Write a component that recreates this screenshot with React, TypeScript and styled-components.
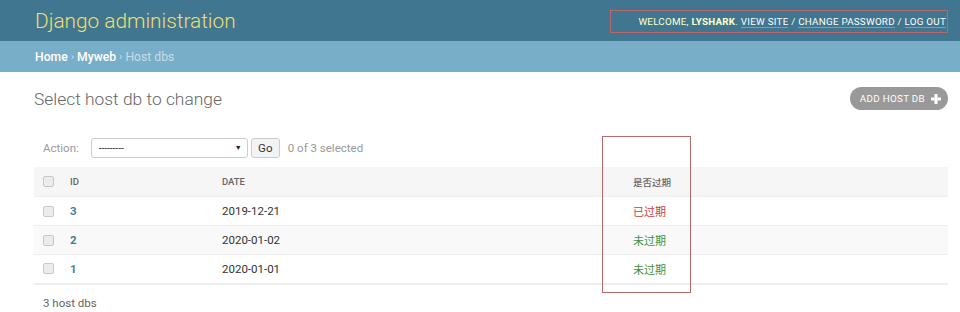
import styled, { createGlobalStyle } from 'styled-components';

const GlobalStyle = createGlobalStyle`
  html, body {
    margin: 0;
    padding: 0;
    background: #fff;
    font-family: Roboto, "Liberation Sans", "Noto Sans CJK SC", sans-serif;
    color: #333;
  }
`;

const Page = styled.div`
  width: 960px;
  height: 312px;
  position: relative;
  overflow: hidden;
`;

const Header = styled.div`
  height: 41px;
  background: #417690;
  display: flex;
  align-items: center;
  justify-content: space-between;
  padding: 0 14px 0 35px;
`;

const Branding = styled.div`
  font-size: 20.8px;
  font-weight: 300;
  color: #f0df6a;
`;

const UserTools = styled.div`
  font-size: 9.8px;
  letter-spacing: 0.25px;
  text-transform: uppercase;
  color: #ffc;
  margin-top: 2px;
`;

const UserName = styled.strong`
  font-weight: 700;
`;

const ToolLink = styled.span`
  color: #fff;
  border-bottom: 1px solid rgba(255, 255, 255, 0.3);
`;

const Breadcrumbs = styled.div`
  height: 31px;
  background: #79aec8;
  display: flex;
  align-items: center;
  padding-left: 35px;
  font-size: 12.2px;
  color: #c4dce8;
`;

const Crumb = styled.span`
  color: #fff;
  font-weight: 500;
`;

const Sep = styled.span`
  margin: 0 3px;
  font-size: 11px;
`;

const Content = styled.div`
  padding: 15px 12px 0 34px;
`;

const TitleRow = styled.div`
  display: flex;
  align-items: center;
  justify-content: space-between;
  height: 23px;
`;

const Title = styled.h1`
  margin: 0;
  font-size: 17.4px;
  font-weight: 300;
  color: #666;
`;

const AddButton = styled.div`
  height: 23px;
  padding: 0 7px 0 10px;
  border-radius: 12px;
  background: #999;
  color: #fff;
  font-size: 9.8px;
  letter-spacing: 0.3px;
  display: flex;
  align-items: center;
  gap: 6px;
`;

const Actions = styled.div`
  margin-top: 27px;
  height: 22px;
  display: flex;
  align-items: center;
  padding-left: 9px;
  font-size: 11.5px;
  color: #999;
`;

const Select = styled.div`
  margin-left: 12px;
  width: 157px;
  height: 20px;
  border: 1px solid #ccc;
  border-radius: 3px;
  display: flex;
  align-items: center;
  justify-content: space-between;
  padding: 0 5px 0 7px;
  color: #333;
  font-size: 10px;
  box-sizing: border-box;
`;

const Arrow = styled.span`
  font-size: 7px;
  color: #222;
`;

const GoButton = styled.div`
  margin-left: 3px;
  width: 29px;
  height: 20px;
  border: 1px solid #ccc;
  border-radius: 3px;
  background: #f3f3f3;
  color: #333;
  font-size: 11.5px;
  display: flex;
  align-items: center;
  justify-content: center;
  box-sizing: border-box;
`;

const Counter = styled.span`
  margin-left: 8px;
`;

const Table = styled.table`
  margin-top: 8px;
  width: 100%;
  border-collapse: collapse;
  table-layout: fixed;
  font-size: 11.5px;
`;

const HeadCell = styled.th<{ $w?: number }>`
  ${(p) => (p.$w ? `width: ${p.$w}px;` : '')}
  height: 29px;
  padding: 0 0 0 10px;
  background: #f6f6f6;
  text-align: left;
  font-size: 9.5px;
  font-weight: 500;
  color: #666;
  text-transform: uppercase;
  border-bottom: 1px solid #eee;
  vertical-align: middle;
`;

const BoxHeadCell = styled(HeadCell)`
  padding-left: 9px;
`;

const BoxCell = styled.td`
  padding: 0 0 0 9px;
`;

const Row = styled.tr<{ $alt: boolean }>`
  background: ${(p) => (p.$alt ? '#f9f9f9' : '#fff')};
  height: 29px;
  & > td {
    border-bottom: 1px solid #eee;
    vertical-align: middle;
  }
  &:last-child > td {
    border-bottom: 2px solid #eee;
  }
`;

const Cell = styled.td`
  padding: 0 0 0 10px;
  color: #333;
`;

const IdLink = styled.span`
  color: #447e9b;
  font-weight: 700;
`;

const Status = styled.span<{ $expired: boolean }>`
  color: ${(p) => (p.$expired ? '#c93c3c' : '#3d9140')};
  font-size: 11px;
`;

const CheckBox = styled.span`
  display: block;
  width: 9px;
  height: 9px;
  border: 1px solid #c8c8c8;
  border-radius: 2px;
  background: #ececec;
`;

const Paginator = styled.div`
  padding: 7px 0 0 9px;
  font-size: 11.5px;
  color: #666;
  line-height: 22px;
`;

const Marker = styled.div<{ $x: number; $y: number; $w: number; $h: number }>`
  position: absolute;
  left: ${(p) => p.$x}px;
  top: ${(p) => p.$y}px;
  width: ${(p) => p.$w}px;
  height: ${(p) => p.$h}px;
  border: 1px solid #b8676a;
  box-sizing: border-box;
  pointer-events: none;
`;

const rows = [
  { id: 3, date: '2019-12-21', expired: true },
  { id: 2, date: '2020-01-02', expired: false },
  { id: 1, date: '2020-01-01', expired: false },
];

function PlusIcon() {
  return (
    <svg width="10" height="10" viewBox="0 0 10 10">
      <rect x="3.5" y="0" width="3" height="10" fill="#fff" />
      <rect x="0" y="3.5" width="10" height="3" fill="#fff" />
    </svg>
  );
}

export default function App() {
  return (
    <Page>
      <GlobalStyle />
      <Header>
        <Branding>Django administration</Branding>
        <UserTools>
          Welcome, <UserName>lyshark</UserName>. <ToolLink>View site</ToolLink> /{' '}
          <ToolLink>Change password</ToolLink> / <ToolLink>Log out</ToolLink>
        </UserTools>
      </Header>
      <Breadcrumbs>
        <Crumb>Home</Crumb>
        <Sep>›</Sep>
        <Crumb>Myweb</Crumb>
        <Sep>›</Sep>
        Host dbs
      </Breadcrumbs>
      <Content>
        <TitleRow>
          <Title>Select host db to change</Title>
          <AddButton>
            ADD HOST DB
            <PlusIcon />
          </AddButton>
        </TitleRow>
        <Actions>
          Action:
          <Select>
            ---------
            <Arrow>▼</Arrow>
          </Select>
          <GoButton>Go</GoButton>
          <Counter>0 of 3 selected</Counter>
        </Actions>
        <Table>
          <thead>
            <tr>
              <BoxHeadCell $w={17}>
                <CheckBox />
              </BoxHeadCell>
              <HeadCell $w={142}>ID</HeadCell>
              <HeadCell $w={401}>Date</HeadCell>
              <HeadCell>是否过期</HeadCell>
            </tr>
          </thead>
          <tbody>
            {rows.map((r, i) => (
              <Row key={r.id} $alt={i % 2 === 1}>
                <BoxCell>
                  <CheckBox />
                </BoxCell>
                <Cell>
                  <IdLink>{r.id}</IdLink>
                </Cell>
                <Cell>{r.date}</Cell>
                <Cell>
                  <Status $expired={r.expired}>{r.expired ? '已过期' : '未过期'}</Status>
                </Cell>
              </Row>
            ))}
          </tbody>
        </Table>
        <Paginator>3 host dbs</Paginator>
      </Content>
      <Marker $x={610} $y={10} $w={338} $h={23} />
      <Marker $x={602} $y={136} $w={89} $h={157} />
    </Page>
  );
}
